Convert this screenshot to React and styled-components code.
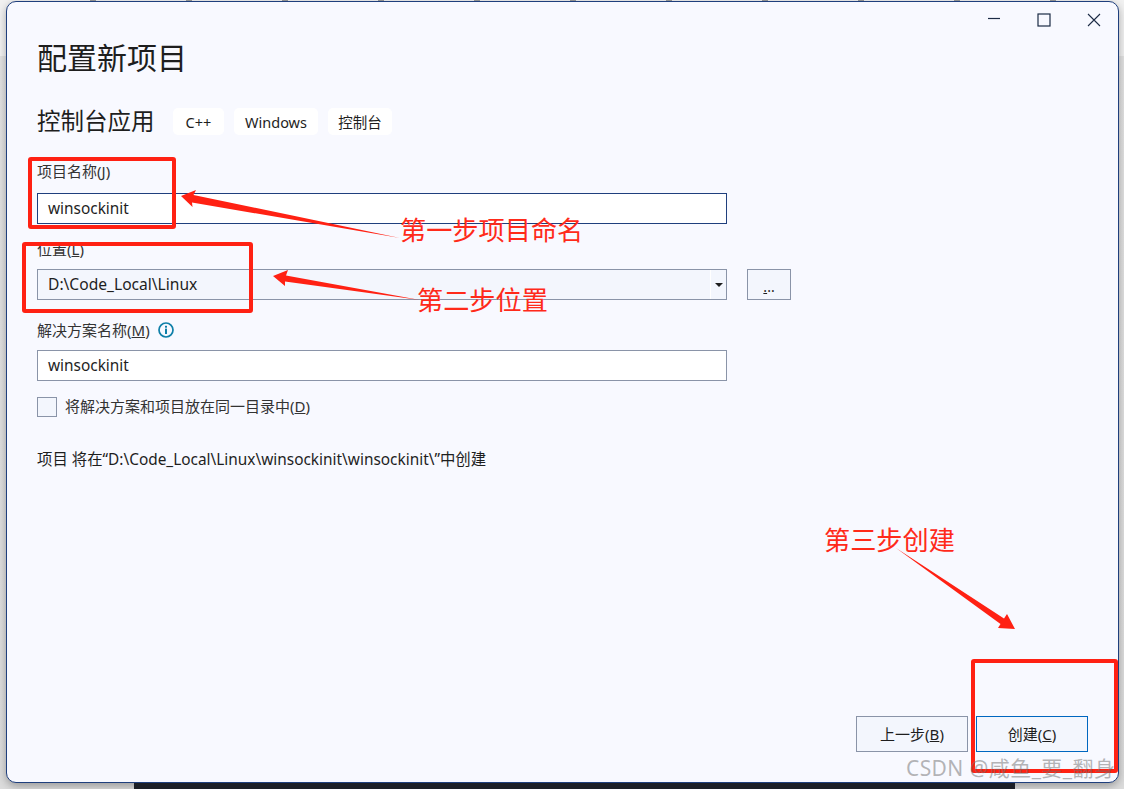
import React from 'react'
import styled, { createGlobalStyle } from 'styled-components'

const GlobalStyle = createGlobalStyle`
  html, body { margin: 0; padding: 0; background: #fff; }
  body { font-family: "Noto Sans", "Noto Sans CJK SC", sans-serif; }
`

const UI_FONT = `"Noto Sans", "Noto Sans CJK SC", sans-serif`

export default function App() {
  return (
    <>
      <GlobalStyle />
      <Page>
        <TopEdge />
        <Dialog>
          <TitleBar>
            <WindowButton aria-label="minimize">
              <svg width="14" height="14" viewBox="0 0 14 14"><path d="M1 5.5h12" stroke="#1c2b45" strokeWidth="1.2" fill="none" /></svg>
            </WindowButton>
            <WindowButton aria-label="maximize">
              <svg width="14" height="14" viewBox="0 0 14 14"><rect x="1" y="1" width="12" height="12" stroke="#1c2b45" strokeWidth="1.2" fill="none" /></svg>
            </WindowButton>
            <WindowButton aria-label="close">
              <svg width="14" height="14" viewBox="0 0 14 14"><path d="M1 1l12 12M13 1L1 13" stroke="#1c2b45" strokeWidth="1.1" fill="none" /></svg>
            </WindowButton>
          </TitleBar>

          <Body>
            <Heading>配置新项目</Heading>
            <SubRow>
              <SubHeading>控制台应用</SubHeading>
              <Chips>
                <Chip $width={51}>C++</Chip>
                <Chip $width={84}>Windows</Chip>
                <Chip $width={64}>控制台</Chip>
              </Chips>
            </SubRow>

            <Field $top={26}>
              <Label $gap={12}>项目名称(<u>J</u>)</Label>
              <TextBox $focused>winsockinit</TextBox>
            </Field>

            <Field $top={15}>
              <Label $gap={10}>位置(<u>L</u>)</Label>
              <ComboRow>
                <ComboBox>
                  <ComboValue>D:\Code_Local\Linux</ComboValue>
                  <ComboArrow>
                    <svg width="8" height="4" viewBox="0 0 8 4"><path d="M0 0h8L4 4z" fill="#1e1e1e" /></svg>
                  </ComboArrow>
                </ComboBox>
                <BrowseButton><u>.</u>..</BrowseButton>
              </ComboRow>
            </Field>

            <Field $top={20}>
              <Label $gap={10}>
                解决方案名称(<u>M</u>)
                <InfoIcon viewBox="0 0 16 16">
                  <circle cx="8" cy="8" r="7" fill="none" stroke="#0e7fa8" strokeWidth="1.7" />
                  <rect x="7" y="6.6" width="2" height="5.4" fill="#0e7fa8" />
                  <rect x="7" y="3.8" width="2" height="1.9" fill="#0e7fa8" />
                </InfoIcon>
              </Label>
              <TextBox>winsockinit</TextBox>
            </Field>

            <CheckRow>
              <CheckBox />
              <CheckText>将解决方案和项目放在同一目录中(<u>D</u>)</CheckText>
            </CheckRow>

            <PathNote>项目 将在“D:\Code_Local\Linux\winsockinit\winsockinit\”中创建</PathNote>

            <Footer>
              <ActionButton>上一步(<u>B</u>)</ActionButton>
              <ActionButton $primary>创建(<u>C</u>)</ActionButton>
            </Footer>
          </Body>
        </Dialog>
        <BottomBar />

        <Arrows viewBox="0 0 1124 789" width="1124" height="789">
          <polygon points="181,196 196,190 193.5,195 400,238 192,202.5 192.5,207" fill="#ff2113" />
          <polygon points="273,276 288,270 286,275.5 420,300 285,281.5 285,286" fill="#ff2113" />
          <polygon points="896,548 1004,618.5 1007,614 1015,629 998,628 1000.5,624" fill="#ff2113" />
        </Arrows>
        <RedBox $left={28} $top={157} $width={148} $height={72} />
        <RedBox $left={22} $top={242} $width={231} $height={71} />
        <RedBox $left={971} $top={659} $width={147} $height={114} />
        <Note $left={400} $top={212}>第一步项目命名</Note>
        <Note $left={417} $top={282}>第二步位置</Note>
        <Note $left={824} $top={522}>第三步创建</Note>
        <Watermark>CSDN @咸鱼_要_翻身</Watermark>
      </Page>
    </>
  )
}

const Page = styled.div`
  position: relative;
  width: 1124px;
  height: 789px;
  overflow: hidden;
  background: linear-gradient(#f1f1f1 0, #f1f1f1 56px, #e2e2e2 56px, #dcdcdc 100%);
`

const TopEdge = styled.div`
  height: 1px;
  background: repeating-linear-gradient(90deg, #f1f1f1 0, #f1f1f1 90px, #9a9a9a 90px, #9a9a9a 96px);
`

const Dialog = styled.div`
  box-sizing: border-box;
  display: flex;
  flex-direction: column;
  width: 1113px;
  height: 782px;
  margin-left: 6px;
  background: #f8f9ff;
  border: 1px solid #1f3f7d;
  border-radius: 10px;
  box-shadow: 0 3px 8px rgba(0, 0, 0, 0.3);
  color: #1e1e1e;
  font-family: ${UI_FONT};
`

const TitleBar = styled.div`
  display: flex;
  justify-content: flex-end;
  height: 36px;
  margin-right: -1px;
  flex: none;
`

const WindowButton = styled.div`
  display: flex;
  align-items: center;
  justify-content: center;
  width: 50px;
  height: 36px;
`

const Body = styled.div`
  display: flex;
  flex-direction: column;
  flex: 1;
  padding: 0 30px 30px;
`

const Heading = styled.h1`
  margin: 0;
  font-size: 30px;
  line-height: 40px;
  font-weight: 400;
`

const SubRow = styled.div`
  display: flex;
  align-items: center;
  margin-top: 30px;
`

const SubHeading = styled.h2`
  margin: 0;
  width: 136px;
  font-size: 23.5px;
  line-height: 27px;
  font-weight: 400;
`

const Chips = styled.div`
  display: flex;
  gap: 10px;
`

const Chip = styled.span`
  display: flex;
  align-items: center;
  justify-content: center;
  width: ${p => p.$width}px;
  height: 27px;
  background: #fff;
  border-radius: 5px;
  font-size: 14.5px;
`

const Field = styled.div`
  display: flex;
  flex-direction: column;
  margin-top: ${p => p.$top}px;
`

const Label = styled.label`
  box-sizing: border-box;
  display: flex;
  align-items: center;
  margin-bottom: ${p => p.$gap}px;
  height: 20px;
  padding-bottom: 1px;
  font-size: 15px;
  color: #333;
  white-space: pre;
`

const InfoIcon = styled.svg`
  width: 16px;
  height: 16px;
  margin-left: 8px;
`

const TextBox = styled.div`
  box-sizing: border-box;
  display: flex;
  align-items: center;
  width: 690px;
  height: 31px;
  padding: 0 10px 1px;
  background: #fff;
  border: 1px solid ${p => (p.$focused ? '#1f3f7d' : '#8a94a8')};
  font-size: 15.4px;
`

const ComboRow = styled.div`
  display: flex;
  gap: 20px;
`

const ComboBox = styled.div`
  box-sizing: border-box;
  display: flex;
  align-items: stretch;
  width: 690px;
  height: 31px;
  background: #f3f6fd;
  border: 1px solid #8a94a8;
  font-size: 15.6px;
`

const ComboValue = styled.div`
  flex: 1;
  display: flex;
  align-items: center;
  padding: 0 10px 1px;
`

const ComboArrow = styled.div`
  display: flex;
  align-items: center;
  justify-content: center;
  width: 15px;
  border-left: 1px solid #fff;
`

const BrowseButton = styled.div`
  box-sizing: border-box;
  display: flex;
  align-items: center;
  justify-content: center;
  width: 44px;
  height: 31px;
  padding-top: 3px;
  background: #f3f6fd;
  border: 1px solid #8a94a8;
  font-size: 14px;
`

const CheckRow = styled.div`
  display: flex;
  align-items: center;
  gap: 8px;
  margin-top: 15px;
  font-size: 15px;
  color: #333;
`

const CheckBox = styled.div`
  box-sizing: border-box;
  width: 20px;
  height: 20px;
  background: #f3f6fd;
  border: 1px solid #8a94a8;
`

const CheckText = styled.span`
  line-height: 20px;
  padding-bottom: 1px;
`

const PathNote = styled.p`
  margin: 33px 0 0;
  font-size: 15.4px;
  line-height: 20px;
`

const Footer = styled.div`
  display: flex;
  justify-content: flex-end;
  gap: 8px;
  margin-top: auto;
`

const ActionButton = styled.div`
  box-sizing: border-box;
  display: flex;
  align-items: center;
  justify-content: center;
  width: 112px;
  height: 36px;
  padding-bottom: 1px;
  background: #f3f6fd;
  border: 1px solid ${p => (p.$primary ? '#0067c0' : '#8a94a8')};
  font-size: 15px;
`

const BottomBar = styled.div`
  width: 881px;
  height: 6px;
  margin-left: 134px;
  background: #1c1f26;
`

const Arrows = styled.svg`
  position: absolute;
  inset: 0;
  pointer-events: none;
`

const RedBox = styled.div`
  position: absolute;
  box-sizing: border-box;
  left: ${p => p.$left}px;
  top: ${p => p.$top}px;
  width: ${p => p.$width}px;
  height: ${p => p.$height}px;
  border: 4px solid #ff2113;
  border-radius: 3px;
`

const Note = styled.div`
  position: absolute;
  left: ${p => p.$left}px;
  top: ${p => p.$top}px;
  font-family: "Noto Sans CJK SC", sans-serif;
  font-size: 26.2px;
  line-height: 34px;
  color: #ff2a1a;
  white-space: nowrap;
`

const Watermark = styled.div`
  position: absolute;
  left: 906px;
  top: 755px;
  font-family: "Noto Sans", "Noto Sans CJK SC", sans-serif;
  font-size: 21px;
  line-height: 26px;
  letter-spacing: 0.4px;
  color: rgba(110, 110, 110, 0.5);
  white-space: nowrap;
`
